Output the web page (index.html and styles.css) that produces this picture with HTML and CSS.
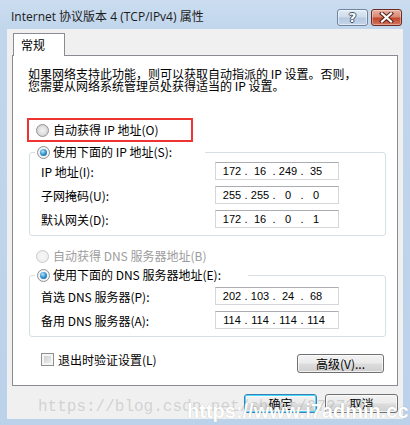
FILE: index.html
```html
<!DOCTYPE html>
<html>
<head>
<meta charset="utf-8">
<link rel="stylesheet" href="styles.css">
</head>
<body>
<div class="window">
  <div class="titlebar">
    <span class="title">Internet 协议版本 4 (TCP/IPv4) 属性</span>
    <div class="caption-btns">
      <span class="cbtn help">?</span>
      <span class="cbtn close">
        <svg width="15" height="11" viewBox="0 0 15 11">
          <path d="M3 1.5 L12 9.5 M12 1.5 L3 9.5" stroke="#5a2018" stroke-width="4.2" stroke-linecap="square" fill="none"/>
          <path d="M3 1.5 L12 9.5 M12 1.5 L3 9.5" stroke="#ffffff" stroke-width="2.2" stroke-linecap="square" fill="none"/>
        </svg>
      </span>
    </div>
  </div>
  <div class="client">
    <div class="tabs"><span class="tab">常规</span></div>
    <div class="panel">
      <p class="intro">如果网络支持此功能，则可以获取自动指派的 IP 设置。否则，<br>您需要从网络系统管理员处获得适当的 IP 设置。</p>
      <div class="highlight">
        <span class="opt"><span class="radio"></span>自动获得 IP 地址(O)</span>
      </div>
      <fieldset class="group g1">
        <legend><span class="radio on"></span>使用下面的 IP 地址(S):</legend>
        <div class="rows">
          <div class="row"><span class="lbl">IP 地址(I):</span><span class="ip"><span class="f">172</span><span class="d">.</span><span class="f">16</span><span class="d">.</span><span class="f">249</span><span class="d">.</span><span class="f">35</span></span></div>
          <div class="row"><span class="lbl">子网掩码(U):</span><span class="ip"><span class="f">255</span><span class="d">.</span><span class="f">255</span><span class="d">.</span><span class="f">0</span><span class="d">.</span><span class="f">0</span></span></div>
          <div class="row"><span class="lbl">默认网关(D):</span><span class="ip"><span class="f">172</span><span class="d">.</span><span class="f">16</span><span class="d">.</span><span class="f">0</span><span class="d">.</span><span class="f">1</span></span></div>
        </div>
      </fieldset>
      <div class="opt disabled dns-auto"><span class="radio off"></span>自动获得 DNS 服务器地址(B)</div>
      <fieldset class="group g2">
        <legend><span class="radio on"></span>使用下面的 DNS 服务器地址(E):</legend>
        <div class="rows">
          <div class="row"><span class="lbl">首选 DNS 服务器(P):</span><span class="ip"><span class="f">202</span><span class="d">.</span><span class="f">103</span><span class="d">.</span><span class="f">24</span><span class="d">.</span><span class="f">68</span></span></div>
          <div class="row"><span class="lbl">备用 DNS 服务器(A):</span><span class="ip"><span class="f">114</span><span class="d">.</span><span class="f">114</span><span class="d">.</span><span class="f">114</span><span class="d">.</span><span class="f">114</span></span></div>
        </div>
      </fieldset>
      <div class="bottom-row">
        <span class="check"><span class="box"></span>退出时验证设置(L)</span>
        <button class="btn adv">高级(V)...</button>
      </div>
    </div>
    <div class="actions">
      <button class="btn default">确定</button>
      <button class="btn">取消</button>
    </div>
  </div>
  <div class="wm-gray">https://blog.csdn.net/sheat/2727379</div>
  <div class="wm-white">https://www.i7admin.cc</div>
</div>
</body>
</html>
```
FILE: styles.css
```css
html, body {
  margin: 0;
  padding: 0;
}
body {
  font-family: "Noto Sans CJK SC", sans-serif;
  font-size: 12px;
  color: #000;
  background: #bcd2ea;
}
.window {
  position: relative;
  width: 410px;
  height: 425px;
  overflow: hidden;
  background: linear-gradient(#cbdcef 0px, #c1d6ec 30px, #bcd2ea 100%);
}
.titlebar {
  display: flex;
  align-items: flex-start;
  height: 29px;
  padding-left: 11px;
}
.title {
  font-family: "Open Sans", "Noto Sans CJK SC", sans-serif;
  font-size: 12px;
  line-height: 16px;
  padding-top: 9px;
  color: #1b1b1b;
}
.caption-btns {
  margin-left: auto;
  margin-top: 9px;
  margin-right: 8px;
  display: flex;
  gap: 3px;
}
.cbtn {
  box-sizing: border-box;
  width: 31px;
  height: 17px;
  border-radius: 3px;
  display: flex;
  align-items: center;
  justify-content: center;
}
.help {
  border: 1px solid #6f84a0;
  background: linear-gradient(#e3ebf5 0%, #cddbeb 48%, #b5c9e1 52%, #c3d5ea 100%);
  box-shadow: inset 0 0 0 1px rgba(255,255,255,0.5);
  font-family: "DejaVu Sans", sans-serif;
  font-weight: bold;
  font-size: 13px;
  line-height: 15px;
  color: #fff;
  text-shadow: 1px 0 0 #3d4f66, -1px 0 0 #3d4f66, 0 1px 0 #3d4f66, 0 -1px 0 #3d4f66;
}
.close {
  border: 1px solid #6b2b22;
  background: linear-gradient(#eab0a3 0%, #d88872 48%, #c2452a 52%, #d2735c 100%);
  box-shadow: inset 0 0 0 1px rgba(255,255,255,0.35);
}
.client {
  box-sizing: border-box;
  margin: 0 7px;
  height: 390px;
  background: #f0f0f0;
  padding: 4px 0 0 5px;
}
.tabs {
  display: flex;
  padding-left: 1px;
}
.tab {
  position: relative;
  z-index: 1;
  box-sizing: border-box;
  width: 52px;
  height: 23px;
  margin-bottom: -1px;
  border: 1px solid #898c95;
  border-bottom: none;
  background: #fff;
  padding-left: 7px;
  line-height: 21px;
  font-size: 12px;
}
.panel {
  box-sizing: border-box;
  width: 386px;
  height: 331px;
  border: 1px solid #898c95;
  background: #fff;
}
.intro {
  margin: 12px 0 0 15px;
  line-height: 12px;
  font-size: 12px;
}
.highlight {
  box-sizing: border-box;
  margin: 26px 0 0 14px;
  width: 166px;
  height: 24px;
  border: 2px solid #ee3333;
  display: flex;
  align-items: center;
  padding-left: 7px;
}
.opt {
  display: flex;
  align-items: center;
  gap: 4px;
  line-height: 14px;
  white-space: nowrap;
}
.radio {
  display: inline-block;
  box-sizing: border-box;
  width: 13px;
  height: 13px;
  border-radius: 50%;
  border: 1px solid #8d9296;
  background: radial-gradient(circle at 50% 50%, #f4f4f4 0%, #e2e2e2 45%, #c6c6c6 100%);
  position: relative;
  vertical-align: -2px;
  flex: none;
}
.radio.on {
  background: radial-gradient(circle, #ffffff 0%, #eaeaea 100%);
}
.radio.on::after {
  content: "";
  position: absolute;
  left: 2px;
  top: 2px;
  width: 7px;
  height: 7px;
  border-radius: 50%;
  background: radial-gradient(circle at 40% 35%, #b8e6fb 0%, #3b9ad6 45%, #124f8c 100%);
}
.radio.off {
  border-color: #c8cacc;
  background: radial-gradient(circle, #f7f7f7 0%, #ececec 100%);
}
.group {
  box-sizing: border-box;
  width: 357px;
  border: 1px solid #d5dfe5;
  border-radius: 3px;
  padding: 0 0 7px 5px;
  margin-left: 16px;
  margin-right: 0;
}
.group legend {
  box-sizing: border-box;
  padding: 0 0 0 2px;
  line-height: 14px;
  white-space: nowrap;
}
.group legend .radio {
  margin-right: 3px;
}
.g1 {
  margin-top: 3px;
}
.g1 legend {
  width: 170px;
}
.g2 {
  margin-top: 5px;
}
.g2 legend {
  width: 213px;
}
.rows {
  display: flex;
  flex-direction: column;
  gap: 6px;
  padding-left: 6px;
}
.g1 .rows {
  margin-top: 3px;
}
.g2 .rows {
  margin-top: 5px;
}
.row {
  display: flex;
  align-items: center;
  height: 18px;
}
.lbl {
  width: 174px;
  white-space: nowrap;
}
.ip {
  box-sizing: border-box;
  width: 124px;
  height: 18px;
  border: 1px solid #d4d6da;
  border-top-color: #abadb3;
  display: flex;
  align-items: center;
  padding-left: 5px;
  font-family: "Liberation Sans", sans-serif;
  font-size: 11px;
  line-height: 16px;
}
.ip .f {
  width: 22px;
  text-align: center;
}
.ip .d {
  width: 6px;
  text-align: center;
}
.dns-auto {
  margin: 13px 0 0 23px;
  height: 14px;
}
.disabled {
  color: #9c9c9c;
}
.bottom-row {
  display: flex;
  align-items: flex-start;
  margin-top: 16px;
  padding-left: 28px;
  padding-right: 13px;
}
.check {
  display: flex;
  align-items: center;
  gap: 4px;
  line-height: 13px;
}
.box {
  box-sizing: border-box;
  width: 13px;
  height: 13px;
  border: 1px solid #8e8f8f;
  background: linear-gradient(135deg, #c9c9c9, #f3f3f3);
  box-shadow: inset 0 0 0 2px #f5f5f5;
}
.btn {
  font-family: "Noto Sans CJK SC", sans-serif;
  font-size: 12px;
  color: #000;
  box-sizing: border-box;
  height: 19px;
  padding: 0;
  border: 1px solid #707070;
  border-radius: 3px;
  background: linear-gradient(#f2f2f2 0%, #ebebeb 48%, #dddddd 52%, #cfcfcf 100%);
  box-shadow: inset 0 0 0 1px rgba(255,255,255,0.7);
  line-height: 16px;
}
.adv {
  margin-left: auto;
  margin-top: 1px;
  width: 87px;
}
.actions {
  display: flex;
  justify-content: flex-end;
  gap: 8px;
  margin-top: 8px;
  margin-right: 5px;
}
.actions .btn {
  width: 73px;
}
.btn.default {
  border-color: #3c7fb1;
  box-shadow: inset 0 0 0 1px #48d8fb, inset 0 0 0 2px rgba(255,255,255,0.6);
}
.wm-gray {
  position: absolute;
  left: 38px;
  top: 399px;
  font-family: "Liberation Mono", monospace;
  font-size: 16px;
  line-height: 16px;
  color: rgba(150,150,150,0.35);
  white-space: nowrap;
  pointer-events: none;
}
.wm-white {
  position: absolute;
  left: 187px;
  top: 401px;
  font-family: "Liberation Sans", sans-serif;
  font-weight: bold;
  font-size: 20px;
  line-height: 20px;
  color: #fff;
  white-space: nowrap;
  text-shadow: 0 0 1px rgba(0,0,0,0.25);
  pointer-events: none;
}
```
